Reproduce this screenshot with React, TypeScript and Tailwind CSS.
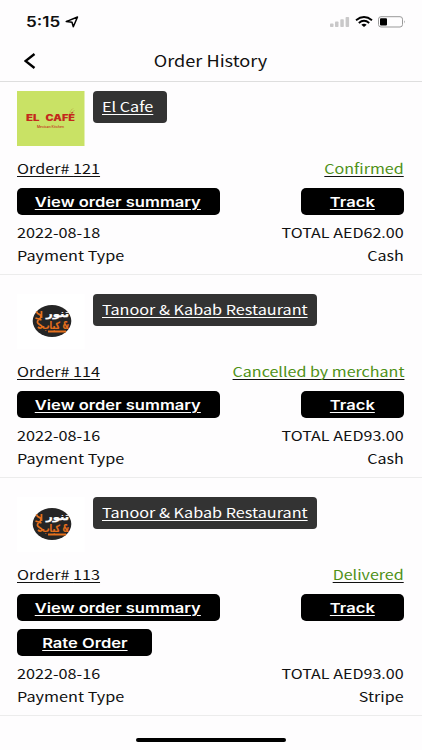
import type { ReactNode } from "react";
import clsx from "clsx";

type Order = {
  id: string;
  restaurant: string;
  logo: "cafe" | "tanoor";
  status: string;
  date: string;
  total: string;
  payment: string;
  canRate?: boolean;
};

const orders: Order[] = [
  { id: "121", restaurant: "El Cafe", logo: "cafe", status: "Confirmed", date: "2022-08-18", total: "AED62.00", payment: "Cash" },
  { id: "114", restaurant: "Tanoor & Kabab Restaurant", logo: "tanoor", status: "Cancelled by merchant", date: "2022-08-16", total: "AED93.00", payment: "Cash" },
  { id: "113", restaurant: "Tanoor & Kabab Restaurant", logo: "tanoor", status: "Delivered", date: "2022-08-16", total: "AED93.00", payment: "Stripe", canRate: true },
];

// Wide-set label, stretched from its own edge
function Label({ children, className }: { children: ReactNode; className?: string }) {
  return <span className={clsx("inline-block whitespace-nowrap", className)}>{children}</span>;
}

function Button({ children, className }: { children: ReactNode; className?: string }) {
  return (
    <button
      className={clsx(
        "flex h-[27.5px] items-center justify-center rounded-[5px] bg-black pt-0.5 font-['Inter'] text-[13.5px] leading-none font-semibold text-white underline decoration-1 underline-offset-2",
        className
      )}
    >
      <Label className="scale-x-[1.225]">{children}</Label>
    </button>
  );
}

function CafeLogo() {
  return (
    <svg className="h-[55px] w-[67.5px] shrink-0" viewBox="0 0 67.5 55">
      <rect width="67.5" height="55" fill="#c9e265" />
      <g fill="#c4291c" fontFamily="Inter, sans-serif" fontWeight="900">
        <text x="9" y="30" fontSize="8.6" textLength="13.5" lengthAdjust="spacingAndGlyphs">EL</text>
        <text x="28.5" y="30" fontSize="8.6" textLength="29.5" lengthAdjust="spacingAndGlyphs">CAFÉ</text>
        <text x="20" y="37" fontSize="3" fontWeight="500" textLength="27" lengthAdjust="spacingAndGlyphs">Mexican Kitchen</text>
      </g>
      <path d="M52 22.500c2-1 4-1 5.500-3.500M53 21c0-1.500 2-2 3-3.500" fill="none" stroke="#b59a3c" strokeWidth=".6" />
    </svg>
  );
}

function TanoorLogo() {
  return (
    <svg className="h-[55px] w-[67.5px] shrink-0" viewBox="0 0 67.5 55">
      <rect width="67.5" height="55" fill="#fff" />
      <ellipse cx="35" cy="27" rx="19.300" ry="16" fill="#252525" />
      <g fontFamily="DejaVu Sans, sans-serif" fontWeight="700">
        <text x="29" y="23" fontSize="10" fill="#fff" stroke="#fff" strokeWidth=".3" textLength="23" lengthAdjust="spacingAndGlyphs">تنور</text>
        <text x="25" y="34.5" fontSize="10" fill="#e5701d" stroke="#e5701d" strokeWidth=".2" textLength="27" lengthAdjust="spacingAndGlyphs">{"كباب &"}</text>
      </g>
      <path d="M19.500 17.500c1 4 4.500 2 4.500 5s-4.500 3-3.500 6 4 1 5 5M24.500 17v7M18.500 24l6 2M21 33c2 2 4 1 5-1M31 37.500h18" fill="none" stroke="#e5701d" strokeWidth="1.800" />
    </svg>
  );
}

function StatusBar() {
  return (
    <div className="flex h-[41px] items-center justify-between pt-0.5 pr-4 pl-[26px]">
      <div className="flex items-center gap-[5px]">
        <span className="w-[34px] font-['Inter'] text-[14px] leading-none font-semibold">
          <span className="inline-block origin-left scale-x-[1.22]">5:15</span>
        </span>
        <svg width="14" height="12" viewBox="0 0 14 12">
          <path d="M1.200 5.600 12.500 1 8.300 10.800 7 6.300Z" fill="none" stroke="#000" strokeWidth="1.500" strokeLinejoin="round" />
        </svg>
      </div>
      <div className="flex items-center">
        <svg width="20" height="12" viewBox="0 0 20 12" fill="#c9c8c9">
          <rect x="0" y="7.500" width="3.500" height="3.500" rx=".8" />
          <rect x="5" y="5.500" width="3.500" height="5.500" rx=".8" />
          <rect x="10.300" y="3.200" width="3.500" height="7.800" rx=".8" />
          <rect x="15.600" y="1" width="3.500" height="10" rx=".8" />
        </svg>
        <svg className="ml-[5px]" width="18" height="12" viewBox="0 0 18 12" fill="none" stroke="#000" strokeWidth="1.900">
          <path d="M1 4.200Q9-2 17 4.200M3.800 6.900Q9 2.700 14.200 6.900" />
          <path d="M6.300 8.700Q9 6.700 11.700 8.700L9 11Z" fill="#000" stroke="none" />
        </svg>
        <svg className="ml-[5px]" width="28" height="12" viewBox="0 0 28 12">
          <rect x=".5" y=".7" width="24" height="10.300" rx="2.500" fill="none" stroke="#999" />
          <rect x="2" y="2.300" width="7" height="7.100" rx="1" />
          <path d="M26 4.200q1.600 1.600 0 3.200z" fill="#999" />
        </svg>
      </div>
    </div>
  );
}

function OrderCard({ order }: { order: Order }) {
  const link = "underline decoration-1 underline-offset-2 [text-decoration-skip-ink:none]";
  const left = "origin-left scale-x-[1.2]";
  const right = "origin-right scale-x-[1.19]";
  return (
    <section className="border-b border-[#ececec] pr-[18px] pb-[6.5px] pl-[17px] text-[13.5px] leading-[23.5px]">
      <div className="flex h-[55px] items-start gap-[8.5px]">
        {order.logo === "cafe" ? <CafeLogo /> : <TanoorLogo />}
        <a
          className={clsx(
            "flex h-8 items-center rounded-[4px] bg-[#333] pl-[9px] text-white",
            link,
            order.logo === "cafe" ? "w-[73.5px]" : "w-[224px]"
          )}
        >
          <Label className={left}>{order.restaurant}</Label>
        </a>
      </div>
      <div className={clsx("mt-[11px] flex h-6 justify-between", link)}>
        <Label className={left}>Order# {order.id}</Label>
        <Label className={clsx(right, "text-[#4f9117]")}>{order.status}</Label>
      </div>
      <div className="mt-[6.5px] flex justify-between">
        <Button className="w-[202.5px]">View order summary</Button>
        <Button className="w-[103.5px]">Track</Button>
      </div>
      {order.canRate && <Button className="mt-[7.5px] w-[135px]">Rate Order</Button>}
      <div className="mt-[5.5px] flex justify-between">
        <Label className={left}>{order.date}</Label>
        <Label className={right}>TOTAL {order.total}</Label>
      </div>
      <div className="flex justify-between">
        <Label className={left}>Payment Type</Label>
        <Label className={right}>{order.payment}</Label>
      </div>
    </section>
  );
}

export default function App() {
  return (
    <main className="flex h-[750px] w-[422px] flex-col overflow-hidden bg-[#fefdfe] font-['Noto_Sans_CJK_SC',sans-serif] text-[#111]">
      <StatusBar />
      <header className="grid h-[41px] grid-cols-[60px_1fr_60px] items-center border-b border-[#dedede]">
        <svg className="ml-6" width="12" height="16" viewBox="0 0 12 16" fill="none" stroke="#000" strokeWidth="2.400">
          <path d="M10.500 1 1.500 8l9 7" />
        </svg>
        <h1 className="pb-px text-center text-[15.5px] leading-none">
          <Label className="scale-x-[1.17]">Order History</Label>
        </h1>
      </header>
      <div className="flex flex-col gap-[19px] pt-[9px]">
        {orders.map((order) => (
          <OrderCard key={order.id} order={order} />
        ))}
      </div>
      <div className="mx-auto mt-auto mb-2 h-1 w-[150px] rounded-full bg-black" />
    </main>
  );
}
